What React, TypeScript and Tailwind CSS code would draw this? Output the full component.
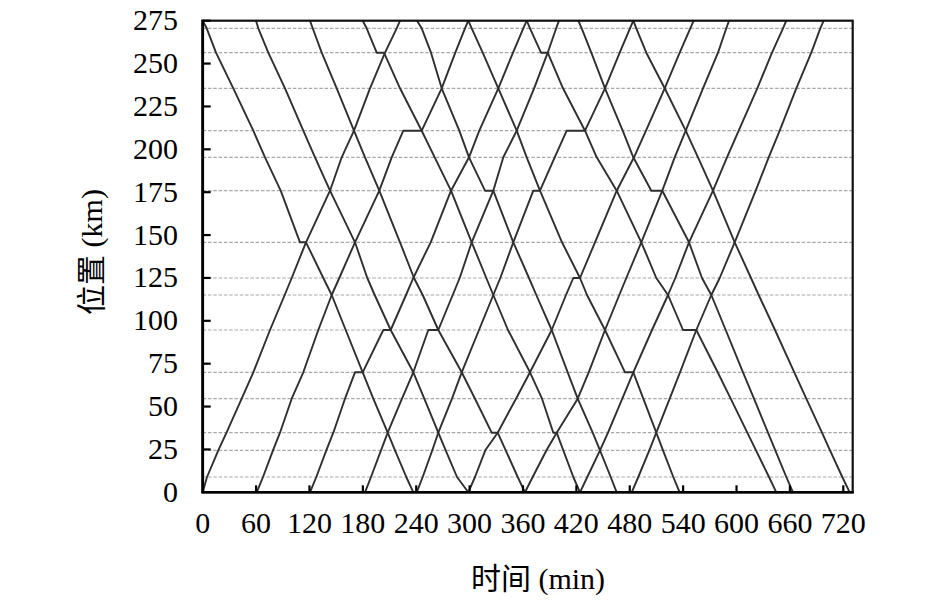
import React from 'react';

// station rows (px, top = 275 km, bottom = 0 km)
const S = [20.7, 28.3, 52.7, 88.3, 130.7, 157.3, 190.7, 242.3, 278, 295, 330, 372.3, 398.7, 432.7, 450.3, 477, 492.3];

type Stop = number | [number, number];

// down trains: x at each station from top to bottom, [arr, dep] = dwell
const downTrains: Stop[][] = [
  [202.7, 206.7, 216, 233.3, 253.3, 265, 280.7, [300, 306], 323.3, 331.7, 345.7, 362.7, 373.3, 387.7, 395, 406.3, 413.3],
  [256, 258.3, 268.3, 285, 303.3, 315, 330, 355, 367.3, 374.7, 390.7, 413.3, 424.3, 438.3, 445.7, 457, 468.3],
  [310, 312.7, 321.7, 336.7, 354, 365, 379.3, 400, 414, 422.7, 438.3, 461.7, 475, [491.7, 497.7], 505.7, 517.7, 525],
  [362.7, 366.7, [376.7, 384], 400, 421.7, 434.7, 451, 471.7, 486.3, 493.3, 508, 530, 542, [553.3, 556.7], 563.3, 573.3, 580],
  [417, 421.7, 431, 441.7, 459.3, 469, [485, 493.3], 513.3, 529, 536.3, 551.7, 567.7, 577.7, 592.7, 600, 610.7, 616.7],
  [468.3, 471.7, 482.7, 498.3, 516.7, 526.7, 540, 562, 580, 587, 605, [625, 633.3], 643.3, 656.3, 663, 673.3, 679.7],
  [526.7, 530, [541, 547.7], 563, 585, 596.7, 616.7, 641.3, 656.3, 668, [683, 696.3], 717.7, 730.7, 747.3, 756, 769, 776.3],
  [578.3, 581.7, 591.3, 605, 622.7, 633.3, [651.3, 662.3], 689, 702, 711.3, 725.7, 743, 754, 768, 775.3, 786.3, 793],
  [633.3, 636.3, 646.3, 664.7, 685.7, 698, 713, 734.7, 751, 758.7, 775, 794.3, 806.3, 822, 830, 842.3, 849.7],
];

// up trains: x at each station from bottom to top
const upTrains: Stop[][] = [
  [202.7, 207, 218.3, 226.5, 241.7, 253.3, 270, 284.7, 291.7, 306, 330, 341.7, 354, 370, 385, 396.7, 400],
  [256.7, 263, 273, 280, 291.7, 303.3, 318.3, 331.7, 339.3, 355, 379.3, 391.7, [403.3, 421.7], 441.7, 455.3, 465, 468.3],
  [310, 316.3, 326.3, 333.3, 345, [355, 362.7], [383.3, 390.7], 406, 413.3, 430.7, 451, 469, 479.3, 498.3, 513, 523.3, 526.7],
  [365, 371, 381, 387.7, 402, 413.3, [428.3, 438.3], 452.7, 459.7, 471.7, 493.3, 503.3, 516.7, 534.1, 547.7, 556.2, 559],
  [416.7, 422.7, 432.3, 438.3, 452, 461.7, 479, 493.3, 500.3, 513.3, [533.3, 540], 554.7, [566.7, 585], 605, 619.7, 630, 633.3],
  [468.3, 475, 485.3, 497.7, 516, 530, 551.7, 566, [573.3, 580], 595, 616.7, 634, 646, 664.7, 679.7, 690.3, 693.7],
  [525, 532.7, 546.5, 556.7, 577.7, 588.7, 605, 619.3, 626.3, 641.3, 662.3, 674.7, 685.7, 703, 718, 726.3, 729],
  [580, 587.3, 600, 608, 622.3, 633.3, 652, 668, 675.3, 689, 713, 727, 738.7, 757.3, 772, 783, 786.3],
  [631.7, 638.3, 649.3, 656.3, 669.7, 680, 696.3, 711.3, 719.7, 734.7, 755.7, 768.7, 779.7, 796.3, 811.3, 820.3, 823.7],
];

const X0 = 202.7;
const X1 = 852.7;
const Y0 = 492.3;
const Y1 = 20.7;
const pxPerMin = 0.8897;
const pxPerKm = (Y0 - Y1) / 275;

const toPoints = (xs: Stop[], up: boolean) =>
  xs
    .flatMap((v, i) => {
      const y = up ? S[16 - i] : S[i];
      return Array.isArray(v) ? [`${v[0]},${y}`, `${v[1]},${y}`] : [`${v},${y}`];
    })
    .join(' ');

const kmTicks = Array.from({ length: 12 }, (_, i) => i * 25);
const minTicks = Array.from({ length: 13 }, (_, i) => i * 60);

const TrainChart: React.FC = () => (
  <svg width={750} height={545} viewBox="120 0 750 545" className="shrink-0">
    {/* station grid */}
    {S.slice(1, 16).map((y) => (
      <line key={y} x1={X0} x2={X1} y1={y} y2={y} stroke="#a8a8a8" strokeWidth={1.2} strokeDasharray="3.5 1.8" />
    ))}

    {/* train paths */}
    <g fill="none" stroke="#2f2f2f" strokeWidth={1.9} strokeLinejoin="round">
      {downTrains.map((t, i) => (
        <polyline key={`d${i}`} points={toPoints(t, false)} />
      ))}
      {upTrains.map((t, i) => (
        <polyline key={`u${i}`} points={toPoints(t, true)} />
      ))}
    </g>

    {/* frame + ticks */}
    <rect x={X0} y={Y1} width={X1 - X0} height={Y0 - Y1} fill="none" stroke="#111" strokeWidth={2.2} />
    <line x1={X0} x2={X0} y1={Y1 - 1} y2={Y0 + 1} stroke="#000" strokeWidth={2.8} />
    <line x1={X0 - 1} x2={X1 + 1} y1={Y0} y2={Y0} stroke="#000" strokeWidth={2.6} />
    {kmTicks.slice(1).map((km) => (
      <line key={km} x1={X0} x2={X0 + 8} y1={Y0 - km * pxPerKm} y2={Y0 - km * pxPerKm} stroke="#000" strokeWidth={2.2} />
    ))}
    {minTicks.slice(1).map((m) => (
      <line key={m} x1={X0 + m * pxPerMin} x2={X0 + m * pxPerMin} y1={Y0} y2={Y0 - 7} stroke="#000" strokeWidth={2.2} />
    ))}

    {/* tick labels */}
    <g fontSize={30} fill="#000" fontFamily="'Liberation Serif', 'Times New Roman', serif">
      {kmTicks.map((km) => (
        <text key={km} x={178} y={Y0 - km * pxPerKm + 9.5} textAnchor="end">
          {km}
        </text>
      ))}
      {minTicks.map((m) => (
        <text key={m} x={X0 + m * pxPerMin} y={533} textAnchor="middle">
          {m}
        </text>
      ))}
    </g>
  </svg>
);

export default function App() {
  return (
    <div className="w-[945px] h-[604px] bg-white flex flex-col font-['Liberation_Serif','Noto_Sans_CJK_SC',serif] text-black overflow-hidden">
      <div className="flex h-[545px]">
        {/* y axis title */}
        <div className="w-[120px] flex items-center justify-end pr-[11px] pb-[41px]">
          <div className="w-[34px] h-[130px] flex items-center justify-center">
            <div className="shrink-0 -rotate-90 whitespace-nowrap text-[30px] leading-[34px]">位置 (km)</div>
          </div>
        </div>
        <TrainChart />
      </div>

      {/* x axis title */}
      <div className="flex justify-center pl-[131px] pt-[17px] text-[30px] leading-[34px]">时间 (min)</div>
    </div>
  );
}
